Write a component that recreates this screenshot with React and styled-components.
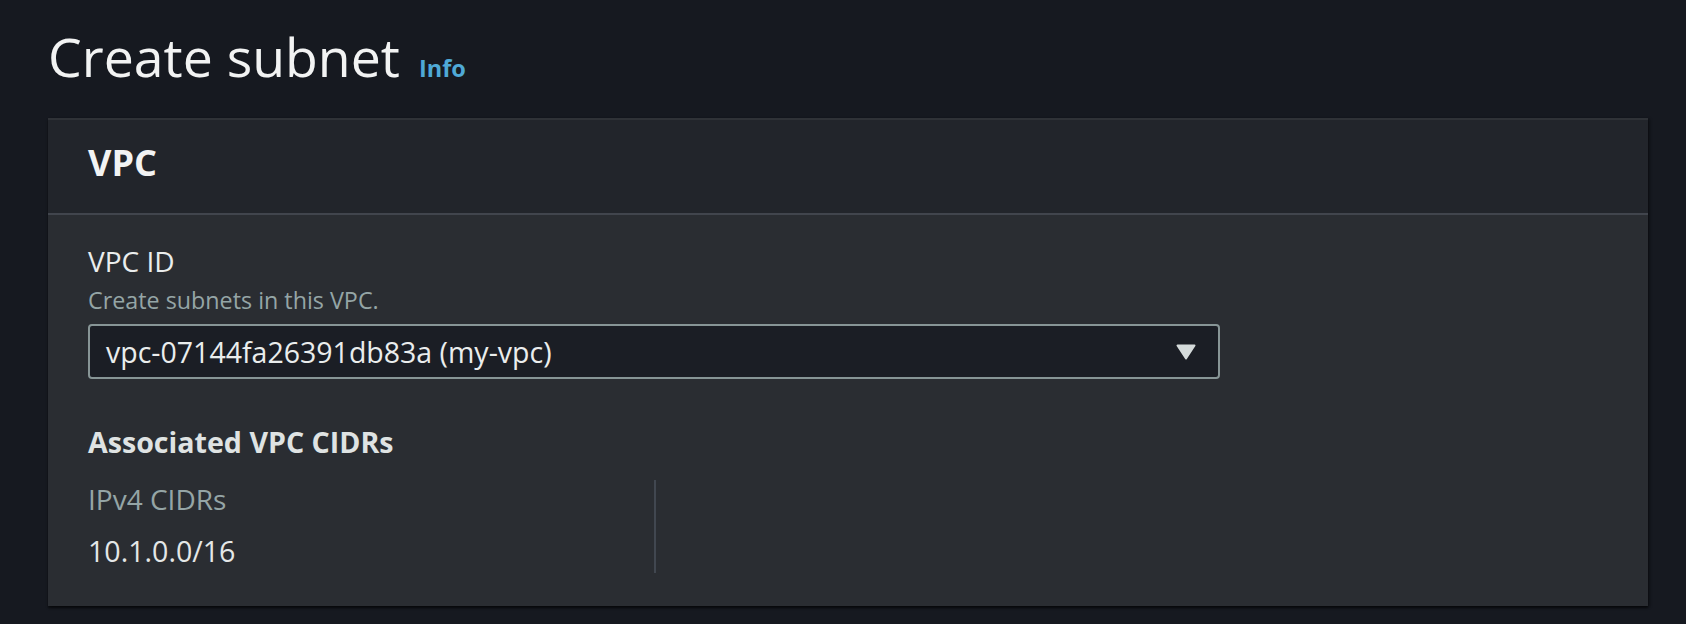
import React from "react";
import styled, { createGlobalStyle } from "styled-components";

const GlobalStyle = createGlobalStyle`
  html, body {
    margin: 0;
    padding: 0;
    background: #161920;
  }
  body {
    font-family: "Open Sans", "Noto Sans", Arial, sans-serif;
    color: #eaeded;
  }
  * { box-sizing: border-box; }
`;

const Page = styled.div`
  min-height: 624px;
  padding: 25px 38px 0 48px;
  background: #161920;
`;

const TitleRow = styled.div`
  display: flex;
  align-items: baseline;
  gap: 19px;
  height: 64px;
  margin-bottom: 29px;
`;

const Title = styled.h1`
  margin: 0;
  font-size: 53.6px;
  line-height: 64px;
  font-weight: 400;
  color: #f2f3f3;
`;

const InfoLink = styled.a`
  font-size: 23.5px;
  line-height: 30px;
  font-weight: 700;
  color: #4fa9d6;
  text-decoration: none;
  cursor: pointer;
`;

const Panel = styled.section`
  width: 1600px;
  background: #2a2d32;
  border-top: 2px solid #2f3237;
  box-shadow: 0 2px 2px rgba(0, 0, 0, 0.55), 2px 1px 3px rgba(0, 0, 0, 0.3);
`;

const PanelHeader = styled.header`
  background: #22252b;
  padding: 21px 40px 28px;
  border-bottom: 2px solid #41454d;
`;

const PanelTitle = styled.h2`
  margin: 0;
  font-size: 36px;
  line-height: 44px;
  font-weight: 700;
  color: #f2f3f3;
`;

const PanelBody = styled.div`
  padding: 28px 40px 33px;
  display: flex;
  flex-direction: column;
`;

const Label = styled.label`
  display: block;
  font-size: 28px;
  line-height: 36px;
  color: #eaeded;
`;

const Description = styled.div`
  margin-top: 5px;
  font-size: 23.3px;
  line-height: 32px;
  color: #95a5a6;
`;

const Select = styled.div`
  margin-top: 8px;
  width: 1132px;
  height: 55px;
  display: flex;
  align-items: center;
  justify-content: space-between;
  padding: 0 22px 0 16px;
  background: #1b1e25;
  border: 2px solid #879596;
  border-radius: 4px;
  font-size: 28.5px;
  line-height: 36px;
  color: #eaeded;
`;

const Caret = styled.svg`
  width: 20px;
  height: 16px;
  flex: none;
`;

const SectionHeading = styled.h3`
  margin: 44px 0 0;
  font-size: 28.6px;
  line-height: 38px;
  font-weight: 700;
  color: #dfe3e3;
`;

const Columns = styled.div`
  margin-top: 19px;
  display: grid;
  grid-template-columns: 568px;
`;

const Column = styled.div`
  padding: 1px 0 4px;
  border-right: 2px solid #414750;
  display: flex;
  flex-direction: column;
  gap: 16px;
`;

const KeyLabel = styled.div`
  font-size: 28px;
  line-height: 36px;
  color: #95a5a6;
`;

const Value = styled.div`
  font-size: 28.6px;
  line-height: 36px;
  color: #e4e7e7;
`;

export default function App() {
  return (
    <>
      <GlobalStyle />
      <Page>
        <TitleRow>
          <Title>Create subnet</Title>
          <InfoLink>Info</InfoLink>
        </TitleRow>
        <Panel>
          <PanelHeader>
            <PanelTitle>VPC</PanelTitle>
          </PanelHeader>
          <PanelBody>
            <Label>VPC ID</Label>
            <Description>Create subnets in this VPC.</Description>
            <Select>
              <span>vpc-07144fa26391db83a (my-vpc)</span>
              <Caret viewBox="0 0 20 16">
                <polygon
                  points="1.5,1.5 18.5,1.5 10,14.5"
                  fill="#d5dbdb"
                  stroke="#d5dbdb"
                  strokeWidth="2"
                  strokeLinejoin="round"
                />
              </Caret>
            </Select>
            <SectionHeading>Associated VPC CIDRs</SectionHeading>
            <Columns>
              <Column>
                <KeyLabel>IPv4 CIDRs</KeyLabel>
                <Value>10.1.0.0/16</Value>
              </Column>
            </Columns>
          </PanelBody>
        </Panel>
      </Page>
    </>
  );
}
